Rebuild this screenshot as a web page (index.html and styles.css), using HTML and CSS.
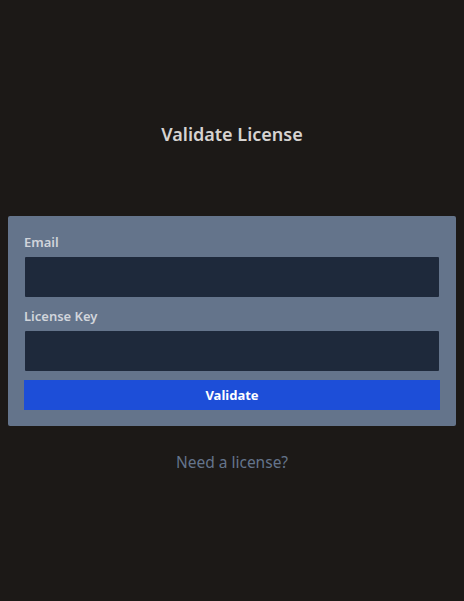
FILE: index.html
```html
<!DOCTYPE html>
<html>
<head>
<meta charset="utf-8">
<link rel="stylesheet" href="styles.css">
</head>
<body>
<main class="page">
  <h1 class="title">Validate License</h1>
  <form class="card">
    <label class="label" for="email">Email</label>
    <input class="input" id="email" type="text">
    <label class="label" for="key">License Key</label>
    <input class="input" id="key" type="text">
    <button class="button" type="button">Validate</button>
  </form>
  <a class="link" href="#">Need a license?</a>
</main>
</body>
</html>
```
FILE: styles.css
```css
html, body {
  margin: 0;
  padding: 0;
  background: #1c1917;
  height: 100%;
}
body {
  font-family: "Noto Sans", "Open Sans", sans-serif;
}
.page {
  padding: 0 8px;
  display: flex;
  flex-direction: column;
  align-items: center;
}
.title {
  margin: 120px 0 0;
  font-size: 18px;
  line-height: 28px;
  font-weight: 600;
  color: #d6d3d1;
}
.card {
  margin-top: 68px;
  align-self: stretch;
  background: #64748b;
  border-radius: 2px;
  padding: 16px;
  display: flex;
  flex-direction: column;
}
.label {
  font-size: 13px;
  line-height: 20px;
  font-weight: 600;
  color: #d1d5db;
  margin-bottom: 5px;
}
.input {
  height: 40px;
  box-sizing: border-box;
  margin: 0 1px 9px;
  background: #1e293b;
  border: none;
  border-radius: 1px;
  outline: none;
}
.button {
  height: 30px;
  border: none;
  background: #1d4ed8;
  color: #ffffff;
  font-family: inherit;
  font-size: 13px;
  font-weight: 700;
  padding: 0;
}
.link {
  margin-top: 24px;
  font-size: 15.5px;
  line-height: 24px;
  color: #64748b;
  text-decoration: none;
}
```
